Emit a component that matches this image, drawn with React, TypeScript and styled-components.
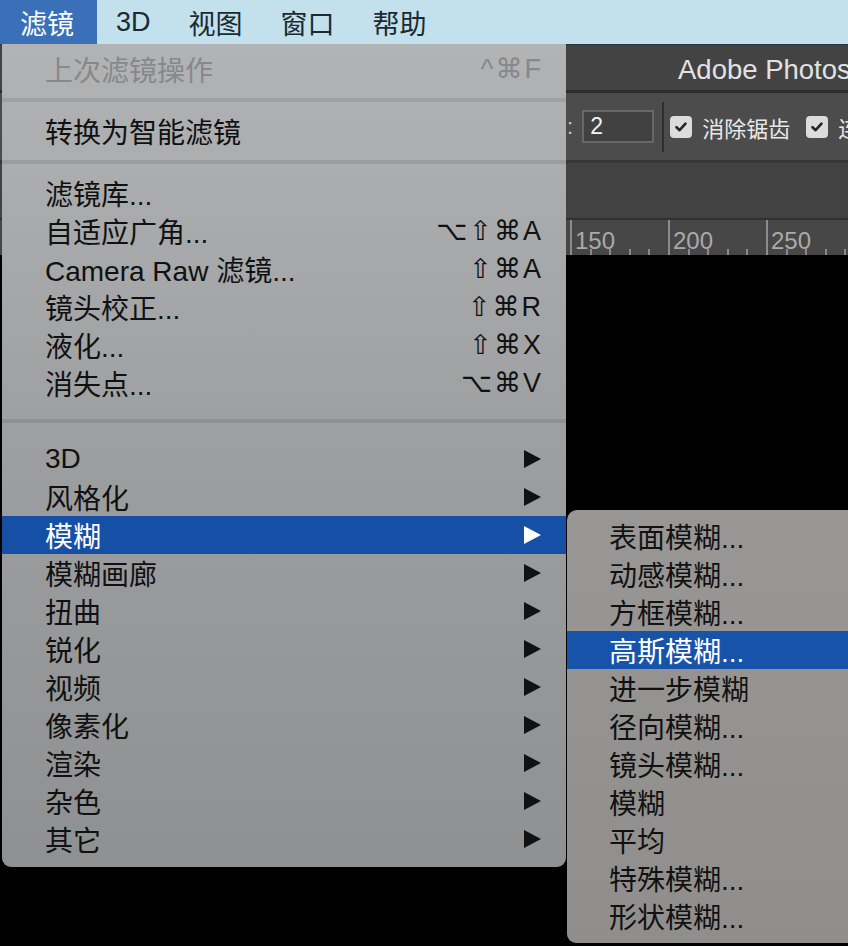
import { FC } from 'react';
import styled, { createGlobalStyle } from 'styled-components';

const sans = `"Liberation Sans", "Noto Sans CJK SC", sans-serif`;

const GlobalStyle = createGlobalStyle`
    html, body {
        margin: 0;
        padding: 0;
        background: #000;
    }
    body {
        font-family: ${sans};
    }
`;

type Entry =
    | {
          kind: 'item';
          label: string;
          shortcut?: string;
          submenu?: boolean;
          disabled?: boolean;
          active?: boolean;
      }
    | { kind: 'sep'; wide?: boolean };

const filterMenu: Entry[] = [
    { kind: 'item', label: '上次滤镜操作', shortcut: '^⌘F', disabled: true },
    { kind: 'sep' },
    { kind: 'item', label: '转换为智能滤镜' },
    { kind: 'sep' },
    { kind: 'item', label: '滤镜库...' },
    { kind: 'item', label: '自适应广角...', shortcut: '⌥⇧⌘A' },
    { kind: 'item', label: 'Camera Raw 滤镜...', shortcut: '⇧⌘A' },
    { kind: 'item', label: '镜头校正...', shortcut: '⇧⌘R' },
    { kind: 'item', label: '液化...', shortcut: '⇧⌘X' },
    { kind: 'item', label: '消失点...', shortcut: '⌥⌘V' },
    { kind: 'sep', wide: true },
    { kind: 'item', label: '3D', submenu: true },
    { kind: 'item', label: '风格化', submenu: true },
    { kind: 'item', label: '模糊', submenu: true, active: true },
    { kind: 'item', label: '模糊画廊', submenu: true },
    { kind: 'item', label: '扭曲', submenu: true },
    { kind: 'item', label: '锐化', submenu: true },
    { kind: 'item', label: '视频', submenu: true },
    { kind: 'item', label: '像素化', submenu: true },
    { kind: 'item', label: '渲染', submenu: true },
    { kind: 'item', label: '杂色', submenu: true },
    { kind: 'item', label: '其它', submenu: true },
];

const blurMenu = [
    '表面模糊...',
    '动感模糊...',
    '方框模糊...',
    '高斯模糊...',
    '进一步模糊',
    '径向模糊...',
    '镜头模糊...',
    '模糊',
    '平均',
    '特殊模糊...',
    '形状模糊...',
];

const menuTitles = ['滤镜', '3D', '视图', '窗口', '帮助'];
const rulerMarks = [0, 50, 100, 150, 200, 250, 300];

const CheckMark: FC = () => (
    <svg width="14" height="14" viewBox="0 0 14 14">
        <path
            d="M2.5 7.2 L5.6 10.2 L11.5 3.6"
            fill="none"
            stroke="#262626"
            strokeWidth="2.6"
            strokeLinecap="round"
            strokeLinejoin="round"
        />
    </svg>
);

const App: FC = () => {
    return (
        <Screen>
            <GlobalStyle />
            <MenuBar>
                {menuTitles.map((title, i) => (
                    <MenuTitle key={title} $active={i === 0}>
                        {title}
                    </MenuTitle>
                ))}
            </MenuBar>

            <AppWindow>
                <TitleBar>Adobe Photoshop 2020</TitleBar>
                <OptionsBar>
                    <Colon>:</Colon>
                    <ValueBox>2</ValueBox>
                    <Divider />
                    <CheckBox>
                        <CheckMark />
                    </CheckBox>
                    <OptionLabel>消除锯齿</OptionLabel>
                    <CheckBox>
                        <CheckMark />
                    </CheckBox>
                    <OptionLabel>连续</OptionLabel>
                </OptionsBar>
                <TabStrip />
                <Ruler>
                    {rulerMarks.map((mark) => (
                        <RulerSegment key={mark}>{mark}</RulerSegment>
                    ))}
                </Ruler>
                <Canvas />
            </AppWindow>

            <Dropdown>
                {filterMenu.map((entry, i) =>
                    entry.kind === 'sep' ? (
                        <Separator key={i} $wide={!!entry.wide} />
                    ) : (
                        <MenuRow
                            key={i}
                            $active={!!entry.active}
                            $disabled={!!entry.disabled}
                        >
                            <span>{entry.label}</span>
                            {entry.shortcut && (
                                <Shortcut>{entry.shortcut}</Shortcut>
                            )}
                            {entry.submenu && <Arrow />}
                        </MenuRow>
                    )
                )}
            </Dropdown>

            <Submenu>
                {blurMenu.map((label, i) => (
                    <SubRow key={label + i} $active={i === 3}>
                        {label}
                    </SubRow>
                ))}
            </Submenu>
        </Screen>
    );
};

export default App;

const Screen = styled.div`
    position: relative;
    width: 848px;
    height: 946px;
    overflow: hidden;
    display: flex;
    flex-direction: column;
    background: #000;
    font-family: ${sans};
`;

const MenuBar = styled.div`
    height: 44px;
    flex-shrink: 0;
    display: flex;
    align-items: stretch;
    background: #c2e1ed;
`;

const MenuTitle = styled.div<{ $active: boolean }>`
    display: flex;
    align-items: center;
    padding: ${({ $active }) => ($active ? '0 23px 0 20px' : '0 19px')};
    font-size: 27px;
    color: ${({ $active }) => ($active ? '#ffffff' : '#1b2a31')};
    background: ${({ $active }) => ($active ? '#3a70b8' : 'transparent')};
`;

const AppWindow = styled.div`
    flex: 1;
    display: flex;
    flex-direction: column;
    border-top: 1px solid #27343b;
`;

const TitleBar = styled.div`
    height: 45px;
    box-sizing: border-box;
    flex-shrink: 0;
    display: flex;
    align-items: center;
    padding: 4px 0 0 678px;
    background: #434343;
    border-bottom: 3px solid #2d2d2d;
    color: #e2e2e2;
    font-size: 27.5px;
    white-space: nowrap;
    height: 48px;
`;

const OptionsBar = styled.div`
    height: 67px;
    flex-shrink: 0;
    display: flex;
    align-items: center;
    padding-left: 567px;
    background: #4c4c4c;
    border-bottom: 3px solid #363636;
    white-space: nowrap;

    & > * {
        flex-shrink: 0;
    }
`;

const Colon = styled.span`
    color: #c8c8c8;
    font-size: 22px;
    margin-right: 9px;
`;

const ValueBox = styled.div`
    box-sizing: border-box;
    width: 72px;
    height: 33px;
    display: flex;
    align-items: center;
    padding-left: 6px;
    border: 2px solid #686868;
    background: #414141;
    color: #f4f4f4;
    font-size: 23px;
`;

const Divider = styled.div`
    width: 2px;
    height: 50px;
    margin: 0 6px 0 8px;
    background: #2f2f2f;
`;

const CheckBox = styled.span`
    width: 22px;
    height: 22px;
    border-radius: 4px;
    background: #dcdcdc;
    display: flex;
    align-items: center;
    justify-content: center;
    margin-right: 10px;
`;

const OptionLabel = styled.span`
    color: #e8e8e8;
    font-size: 22px;
    margin-right: 16px;
`;

const TabStrip = styled.div`
    height: 55px;
    flex-shrink: 0;
    background: #424242;
    border-bottom: 2px solid #303030;
`;

const Ruler = styled.div`
    height: 35px;
    flex-shrink: 0;
    display: flex;
    padding-left: 276px;
    background: #474747;
    white-space: nowrap;
`;

const RulerSegment = styled.div`
    box-sizing: border-box;
    flex-shrink: 0;
    width: 98px;
    height: 100%;
    padding: 6px 0 0 3px;
    border-left: 2px solid #8c8c8c;
    color: #aaaaaa;
    font-size: 24px;
    line-height: 29px;
    background-image: repeating-linear-gradient(
        to right,
        transparent 0,
        transparent 17.6px,
        #8a8a8a 17.6px,
        #8a8a8a 19.6px
    );
    background-size: 100% 6px;
    background-position: left bottom;
    background-repeat: no-repeat;
`;

const Canvas = styled.div`
    flex: 1;
    background: #000;
`;

const Dropdown = styled.div`
    position: absolute;
    left: 2px;
    top: 44px;
    width: 564px;
    box-sizing: border-box;
    padding: 6px 0 9px;
    background: linear-gradient(to bottom, #b1b3b5 0%, #9c9ea0 50%, #8e9092 100%);
    border-radius: 0 0 9px 9px;
`;

const Separator = styled.div<{ $wide: boolean }>`
    height: ${({ $wide }) => ($wide ? '38px' : '24px')};
    display: flex;
    align-items: center;

    &::before {
        content: '';
        flex: 1;
        height: 4px;
        background: rgba(0, 0, 0, 0.09);
    }
`;

const MenuRow = styled.div<{ $active: boolean; $disabled: boolean }>`
    height: 38px;
    display: flex;
    align-items: center;
    justify-content: space-between;
    padding: 0 25px 0 43px;
    font-size: 28px;
    white-space: nowrap;
    color: ${({ $active, $disabled }) =>
        $active ? '#ffffff' : $disabled ? '#86888a' : '#111111'};
    background: ${({ $active }) => ($active ? '#1650a6' : 'transparent')};
`;

const Shortcut = styled.span`
    font-family: 'Liberation Sans', 'DejaVu Sans', sans-serif;
    font-size: 27px;
    letter-spacing: 2px;
    margin-right: -2px;
`;

const Arrow = styled.span`
    width: 0;
    height: 0;
    border-top: 9px solid transparent;
    border-bottom: 9px solid transparent;
    border-left: 17px solid currentColor;
`;

const Submenu = styled.div`
    position: absolute;
    left: 567px;
    top: 510px;
    width: 300px;
    height: 433px;
    box-sizing: border-box;
    padding: 7px 0 8px;
    background: linear-gradient(to bottom, #989795 0%, #8f8e8c 100%);
    border-radius: 10px 0 0 9px;
`;

const SubRow = styled.div<{ $active: boolean }>`
    height: 38px;
    display: flex;
    align-items: center;
    padding-left: 42px;
    font-size: 28px;
    white-space: nowrap;
    color: ${({ $active }) => ($active ? '#ffffff' : '#111111')};
    background: ${({ $active }) => ($active ? '#1853aa' : 'transparent')};
`;
